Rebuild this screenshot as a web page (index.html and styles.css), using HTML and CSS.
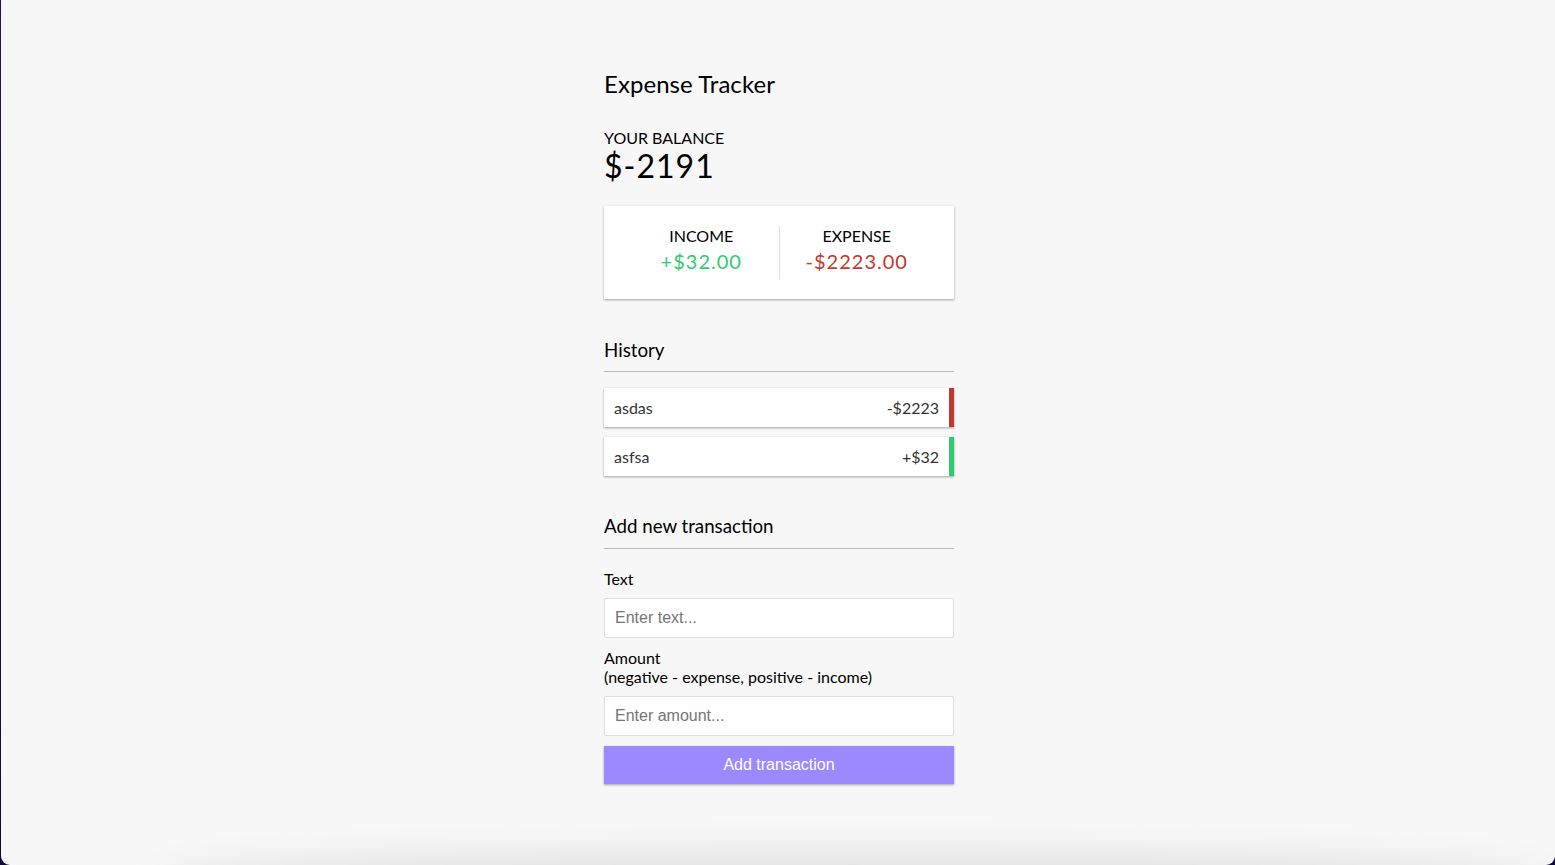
FILE: index.html
```html
<!DOCTYPE html>
<html lang="en">
<head>
<meta charset="UTF-8">
<title>Expense Tracker</title>
<link rel="stylesheet" href="styles.css">
</head>
<body>
<div class="desktop">
  <div class="window">
    <main class="container">
      <h2 class="title">Expense Tracker</h2>
      <h4 class="label-caps">Your Balance</h4>
      <h1 class="balance">$-2191</h1>

      <div class="inc-exp-container">
        <div class="inc-exp-col">
          <h4 class="label-caps">Income</h4>
          <p class="money plus">+$32.00</p>
        </div>
        <div class="inc-exp-col">
          <h4 class="label-caps">Expense</h4>
          <p class="money minus">-$2223.00</p>
        </div>
      </div>

      <h3 class="section-title">History</h3>
      <ul class="list">
        <li class="list-item minus">asdas <span>-$2223</span></li>
        <li class="list-item plus">asfsa <span>+$32</span></li>
      </ul>

      <h3 class="section-title section-title-form">Add new transaction</h3>
      <form class="form">
        <div class="form-control">
          <label class="field-label" for="text">Text</label>
          <input class="field-input" type="text" id="text" placeholder="Enter text...">
        </div>
        <div class="form-control">
          <label class="field-label" for="amount">Amount <br>(negative - expense, positive - income)</label>
          <input class="field-input" type="number" id="amount" placeholder="Enter amount...">
        </div>
        <button class="btn" type="button">Add transaction</button>
      </form>
    </main>
    <div class="dock-shadow"></div>
  </div>
</div>
</body>
</html>
```

FILE: styles.css
```css
* {
  box-sizing: border-box;
}

html, body {
  margin: 0;
  padding: 0;
  height: 100%;
}

body {
  font-family: "Lato", "Noto Sans", sans-serif;
  color: #000;
  overflow: hidden;
}

.desktop {
  height: 865px;
  background: linear-gradient(180deg, #2a0a78 0%, #1a0a55 60%, #0e0a3c 100%);
  display: flex;
}

.window {
  position: relative;
  flex: 1;
  margin-left: 1px;
  padding-left: 2px;
  height: 865px;
  background: #f7f7f7;
  border-radius: 0 0 9px 9px;
  overflow: hidden;
}

.container {
  width: 350px;
  margin: 0 auto;
  padding-top: 70px;
}

.title {
  font-size: 24px;
  font-weight: 400;
  line-height: 1.2;
  letter-spacing: 0.05px;
  margin: 0 0 29px;
}

.label-caps {
  margin: 0;
  font-size: 16px;
  font-weight: 400;
  line-height: 1.2;
  text-transform: uppercase;
}

.balance {
  margin: 0;
  font-size: 32px;
  font-weight: 400;
  line-height: 1.2;
  letter-spacing: 1px;
}

.inc-exp-container {
  background-color: #fff;
  box-shadow: 0 1px 3px rgba(0, 0, 0, 0.12), 0 1px 2px rgba(0, 0, 0, 0.24);
  padding: 20px;
  display: flex;
  justify-content: space-between;
  margin: 21px 0 20px;
}

.inc-exp-col {
  flex: 1;
  text-align: center;
}

.inc-exp-col:first-child {
  border-right: 1px solid #dedede;
}

.money {
  font-size: 20px;
  line-height: 1.2;
  letter-spacing: 1px;
  margin: 3px 0 6px;
}

.money.plus {
  color: #2ecc71;
}

.money.minus {
  color: #c0392b;
}

.section-title {
  font-size: 18.72px;
  font-weight: 400;
  line-height: 1.2;
  border-bottom: 1px solid #bbb;
  padding-bottom: 10px;
  margin: 40px 0 10px;
}

.section-title-form {
  margin-top: 39px;
}

.list {
  list-style-type: none;
  padding: 0;
  margin: 16px 0 39px;
}

.list-item {
  background-color: #fff;
  box-shadow: 0 1px 3px rgba(0, 0, 0, 0.12), 0 1px 2px rgba(0, 0, 0, 0.24);
  color: #333;
  display: flex;
  justify-content: space-between;
  padding: 10px;
  margin: 10px 0;
  font-size: 16px;
  line-height: 1.2;
}

.list-item.plus {
  border-right: 5px solid #2ecc71;
}

.list-item.minus {
  border-right: 5px solid #c0392b;
}

.form {
  margin: 0;
}

.field-label {
  display: inline-block;
  margin: 10px 0;
  font-size: 16px;
  line-height: 1.2;
}

.field-input {
  border: 1px solid #dedede;
  border-radius: 2px;
  display: block;
  font-family: "Liberation Sans", Arial, sans-serif;
  font-size: 16px;
  padding: 10px;
  width: 100%;
  background: #fff;
  margin: 0;
  -moz-appearance: textfield;
}

.field-input::placeholder {
  color: #757575;
}

.field-input::-webkit-outer-spin-button,
.field-input::-webkit-inner-spin-button {
  -webkit-appearance: none;
  margin: 0;
}

.btn {
  cursor: pointer;
  background-color: #9c88ff;
  box-shadow: 0 1px 3px rgba(0, 0, 0, 0.12), 0 1px 2px rgba(0, 0, 0, 0.24);
  color: #fff;
  border: 0;
  display: block;
  font-family: "Liberation Sans", Arial, sans-serif;
  font-size: 16px;
  margin: 10px 0 30px;
  padding: 10px;
  width: 100%;
}

.dock-shadow {
  position: absolute;
  left: 160px;
  right: 10px;
  bottom: -40px;
  height: 40px;
  border-radius: 50%;
  box-shadow: 0 0 40px 8px rgba(0, 0, 0, 0.11);
  background: rgba(0, 0, 0, 0.08);
}
```
